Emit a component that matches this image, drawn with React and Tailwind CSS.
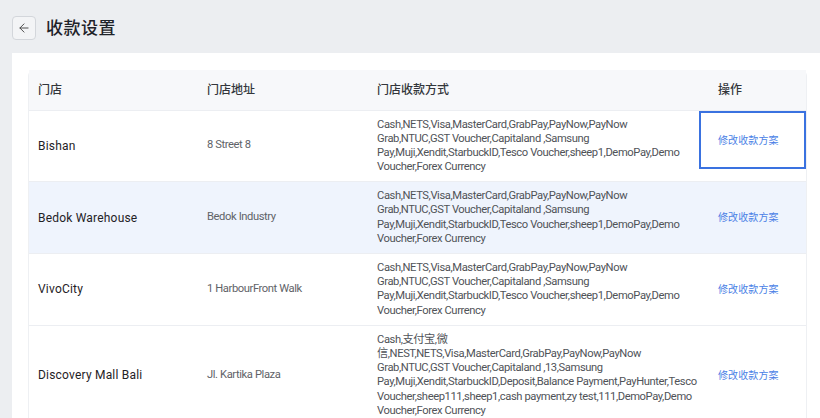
import React from "react";
import { ArrowLeft } from "lucide-react";

/* -------------------- DATA -------------------- */

const STANDARD_METHODS = [
  "Cash,NETS,Visa,MasterCard,GrabPay,PayNow,PayNow",
  "Grab,NTUC,GST Voucher,Capitaland ,Samsung",
  "Pay,Muji,Xendit,StarbuckID,Tesco Voucher,sheep1,DemoPay,Demo",
  "Voucher,Forex Currency",
];

const STORES = [
  { name: "Bishan", address: "8 Street 8", methods: STANDARD_METHODS, focused: true },
  { name: "Bedok Warehouse", address: "Bedok Industry", methods: STANDARD_METHODS, hovered: true },
  { name: "VivoCity", address: "1 HarbourFront Walk", methods: STANDARD_METHODS },
  {
    name: "Discovery Mall Bali",
    address: "Jl. Kartika Plaza",
    methods: [
      "Cash,支付宝,微",
      "信,NEST,NETS,Visa,MasterCard,GrabPay,PayNow,PayNow",
      "Grab,NTUC,GST Voucher,Capitaland ,13,Samsung",
      "Pay,Muji,Xendit,StarbuckID,Deposit,Balance Payment,PayHunter,Tesco",
      "Voucher,sheep111,sheep1,cash payment,zy test,111,DemoPay,Demo",
      "Voucher,Forex Currency",
    ],
  },
];

const FONT = {
  fontFamily: 'Roboto, "Noto Sans CJK SC", sans-serif',
};

/* -------------------- PAGE -------------------- */

const App = () => {
  return (
    <div
      className="flex flex-col w-[820px] h-[418px] overflow-hidden bg-[#eceef1]"
      style={FONT}
    >
      {/* Header */}
      <div className="flex items-center h-[53px] pl-3 pt-[3px] gap-[10px] shrink-0">
        <button className="flex w-6 h-6 items-center justify-center rounded-[4px] border border-[#d3d6db] bg-[#f3f4f6] text-[#444]">
          <ArrowLeft size={14} strokeWidth={1.6} />
        </button>
        <h1 className="text-[17px] leading-none text-[#1f2329] font-medium tracking-[0.5px]">
          收款设置
        </h1>
      </div>

      {/* Card */}
      <div className="flex-1 ml-3 bg-white pl-4 pr-[13px] pt-[17px]">
        <div className="w-[779px] rounded-t-[6px] border-x border-[#eef0f3]">
          <table className="w-full table-fixed border-collapse text-[12px]">
            <colgroup>
              <col className="w-[169px]" />
              <col className="w-[170px]" />
              <col className="w-[341px]" />
              <col />
            </colgroup>
            <thead className="bg-[#f7f8fa]">
              <tr className="h-10 text-[#33363b]">
                <th className="pl-[9px] text-left font-medium">门店</th>
                <th className="pl-[9px] text-left font-medium">门店地址</th>
                <th className="pl-[9px] text-left font-medium">门店收款方式</th>
                <th className="pl-[9px] text-left font-medium">操作</th>
              </tr>
            </thead>
            <tbody>
              {STORES.map((store) => (
                <tr
                  key={store.name}
                  className={`border-t border-[#eceef2] ${store.hovered ? "bg-[#eff4fd]" : "bg-white"}`}
                >
                  <td className="pl-[9px] text-[#1f2226] font-normal text-[12px] tracking-[0.2px]">
                    {store.name}
                  </td>
                  <td className="pl-[9px] text-[#5f6368] text-[11.2px] tracking-[-0.4px]">
                    {store.address}
                  </td>
                  <td className="pl-[9px] py-[7px] text-[#505358] text-[11.2px] tracking-[-0.4px] whitespace-nowrap">
                    {store.methods.map((line, i) => (
                      <div key={i} className="h-[14.2px] leading-[14.2px]">
                        {line}
                      </div>
                    ))}
                  </td>
                  <td className="pl-0 text-[10px] tracking-[0.1px]">
                    {store.focused ? (
                      <div className="flex items-center ml-[-10px] w-[107px] h-[58px] -mt-[11px] border-2 border-[#3a72e0] pl-[17px]">
                        <span className="text-[#4a7fe6] cursor-pointer">修改收款方案</span>
                      </div>
                    ) : (
                      <span className="pl-[9px] text-[#4a7fe6] cursor-pointer">修改收款方案</span>
                    )}
                  </td>
                </tr>
              ))}
            </tbody>
          </table>
        </div>
      </div>
    </div>
  );
};

export default App;
